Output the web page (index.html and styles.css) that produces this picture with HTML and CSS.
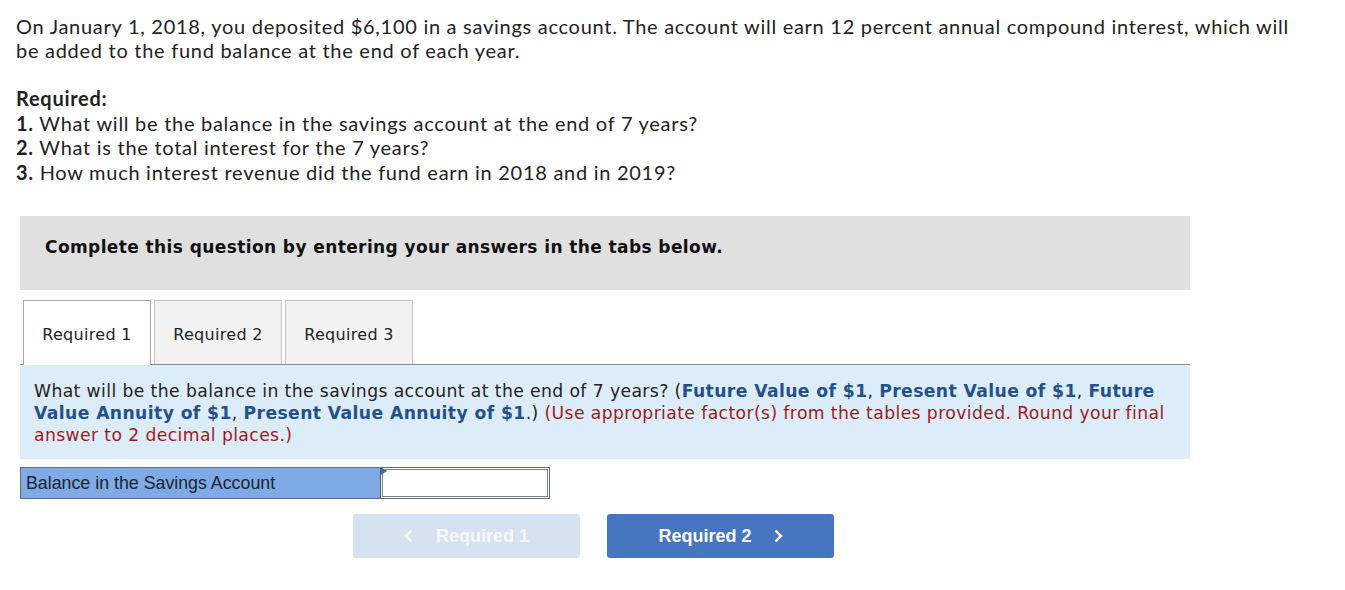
FILE: index.html
```html
<!DOCTYPE html>
<html>
<head>
<meta charset="utf-8">
<link rel="stylesheet" href="styles.css">
</head>
<body>
<div class="page">
  <div class="intro">
    <p class="lead">On January 1, 2018, you deposited $6,100 in a savings account. The account will earn 12 percent annual compound interest, which will be added to the fund balance at the end of each year.</p>
    <p class="req-head"><b>Required:</b></p>
    <p><b>1.</b> What will be the balance in the savings account at the end of 7 years?</p>
    <p><b>2.</b> What is the total interest for the 7 years?</p>
    <p><b>3.</b> How much interest revenue did the fund earn in 2018 and in 2019?</p>
  </div>

  <div class="panel">
    <div class="banner">Complete this question by entering your answers in the tabs below.</div>
    <div class="tabs">
      <div class="tab active">Required 1</div>
      <div class="tab">Required 2</div>
      <div class="tab">Required 3</div>
    </div>
    <div class="question">
      What will be the balance in the savings account at the end of 7 years? (<b class="link">Future Value of $1</b>, <b class="link">Present Value of $1</b>, <b class="link">Future Value Annuity of $1</b>, <b class="link">Present Value Annuity of $1</b>.) <span class="note">(Use appropriate factor(s) from the tables provided. Round your final answer to 2 decimal places.)</span>
    </div>
    <div class="answer-row">
      <div class="answer-label">Balance in the Savings Account</div>
      <div class="answer-input"><span class="flag"></span><div class="field"></div></div>
    </div>
    <div class="nav">
      <div class="btn prev"><svg class="chev" width="9" height="14" viewBox="0 0 9 14"><path d="M7.5 1.5 L2 7 L7.5 12.5" fill="none" stroke="currentColor" stroke-width="2.4"/></svg>Required 1</div>
      <div class="btn next">Required 2<svg class="chev" width="9" height="14" viewBox="0 0 9 14"><path d="M1.5 1.5 L7 7 L1.5 12.5" fill="none" stroke="currentColor" stroke-width="2.4"/></svg></div>
    </div>
  </div>
</div>
</body>
</html>
```

FILE: styles.css
```css
html, body {
  margin: 0;
  padding: 0;
  background: #ffffff;
}
.page {
  padding: 15px 0 0 16px;
  width: 1320px;
}
.intro {
  width: 1300px;
  font-family: Lato, "Open Sans", sans-serif;
  font-size: 20px;
  letter-spacing: 0.72px;
  line-height: 24.5px;
  color: #222;
}
.intro p {
  margin: 0;
}
.intro p.lead {
  line-height: 23.5px;
}
.intro p.req-head {
  margin-top: 24px;
}
.intro b {
  font-weight: 700;
}
.panel {
  margin-top: 32px;
  margin-left: 4px;
  width: 1170px;
  font-family: "DejaVu Sans", Verdana, sans-serif;
}
.banner {
  background: #e0e0e0;
  height: 74px;
  box-sizing: border-box;
  padding: 21px 25px 0;
  font-weight: bold;
  font-size: 17px;
  line-height: 20px;
  letter-spacing: 0.4px;
  color: #111;
}
.tabs {
  margin-top: 10px;
  display: flex;
  gap: 3px;
  padding-left: 3px;
  border-bottom: 1px solid #8c8c8c;
  height: 64px;
}
.tab {
  width: 128px;
  height: 64px;
  box-sizing: border-box;
  border: 1px solid #c6c6c6;
  border-bottom: none;
  background: #f2f2f2;
  display: flex;
  align-items: center;
  justify-content: center;
  padding-top: 4px;
  font-size: 16px;
  letter-spacing: 0.3px;
  color: #222;
}
.tab.active {
  background: #ffffff;
  border-color: #a8a8a8;
  height: 65px;
  padding-top: 3px;
  position: relative;
  z-index: 1;
}
.question {
  background: #ddecf9;
  padding: 15px 14px 13px 14px;
  font-size: 17.2px;
  letter-spacing: 0.4px;
  line-height: 22px;
  color: #222;
}
.link {
  color: #23518c;
  font-weight: bold;
}
.note {
  color: #9e1b1b;
}
.answer-row {
  margin-top: 8px;
  display: flex;
  width: 530px;
  height: 32px;
  box-sizing: border-box;
  border: 1px solid #5f6c7a;
  font-family: "Liberation Sans", Arial, sans-serif;
}
.answer-label {
  width: 360px;
  background: #7eaae5;
  display: flex;
  align-items: center;
  padding-left: 5px;
  box-sizing: border-box;
  font-size: 17.8px;
  color: #1d2430;
  border-right: 1px solid #4a5a70;
}
.answer-input {
  flex: 1;
  position: relative;
  padding: 1px;
  background: #fff;
}
.field {
  height: 100%;
  box-sizing: border-box;
  border: 1px solid #7b8694;
  background: #fff;
}
.flag {
  position: absolute;
  left: 0;
  top: -1px;
  width: 0;
  height: 0;
  border-top: 4px solid transparent;
  border-bottom: 4px solid transparent;
  border-left: 6px solid #3e6aa8;
}
.nav {
  margin-top: 15px;
  margin-left: 333px;
  display: flex;
  gap: 27px;
  font-family: "Liberation Sans", Arial, sans-serif;
}
.btn {
  width: 227px;
  height: 44px;
  border-radius: 3px;
  display: flex;
  align-items: center;
  justify-content: center;
  font-weight: bold;
  font-size: 18px;
  color: #fff;
}
.btn.prev {
  background: #d7e2f0;
  color: #f6f9fc;
}
.btn.next {
  background: #4676bf;
}
.prev .chev {
  margin-right: 23px;
}
.next .chev {
  margin-left: 22px;
}
```
